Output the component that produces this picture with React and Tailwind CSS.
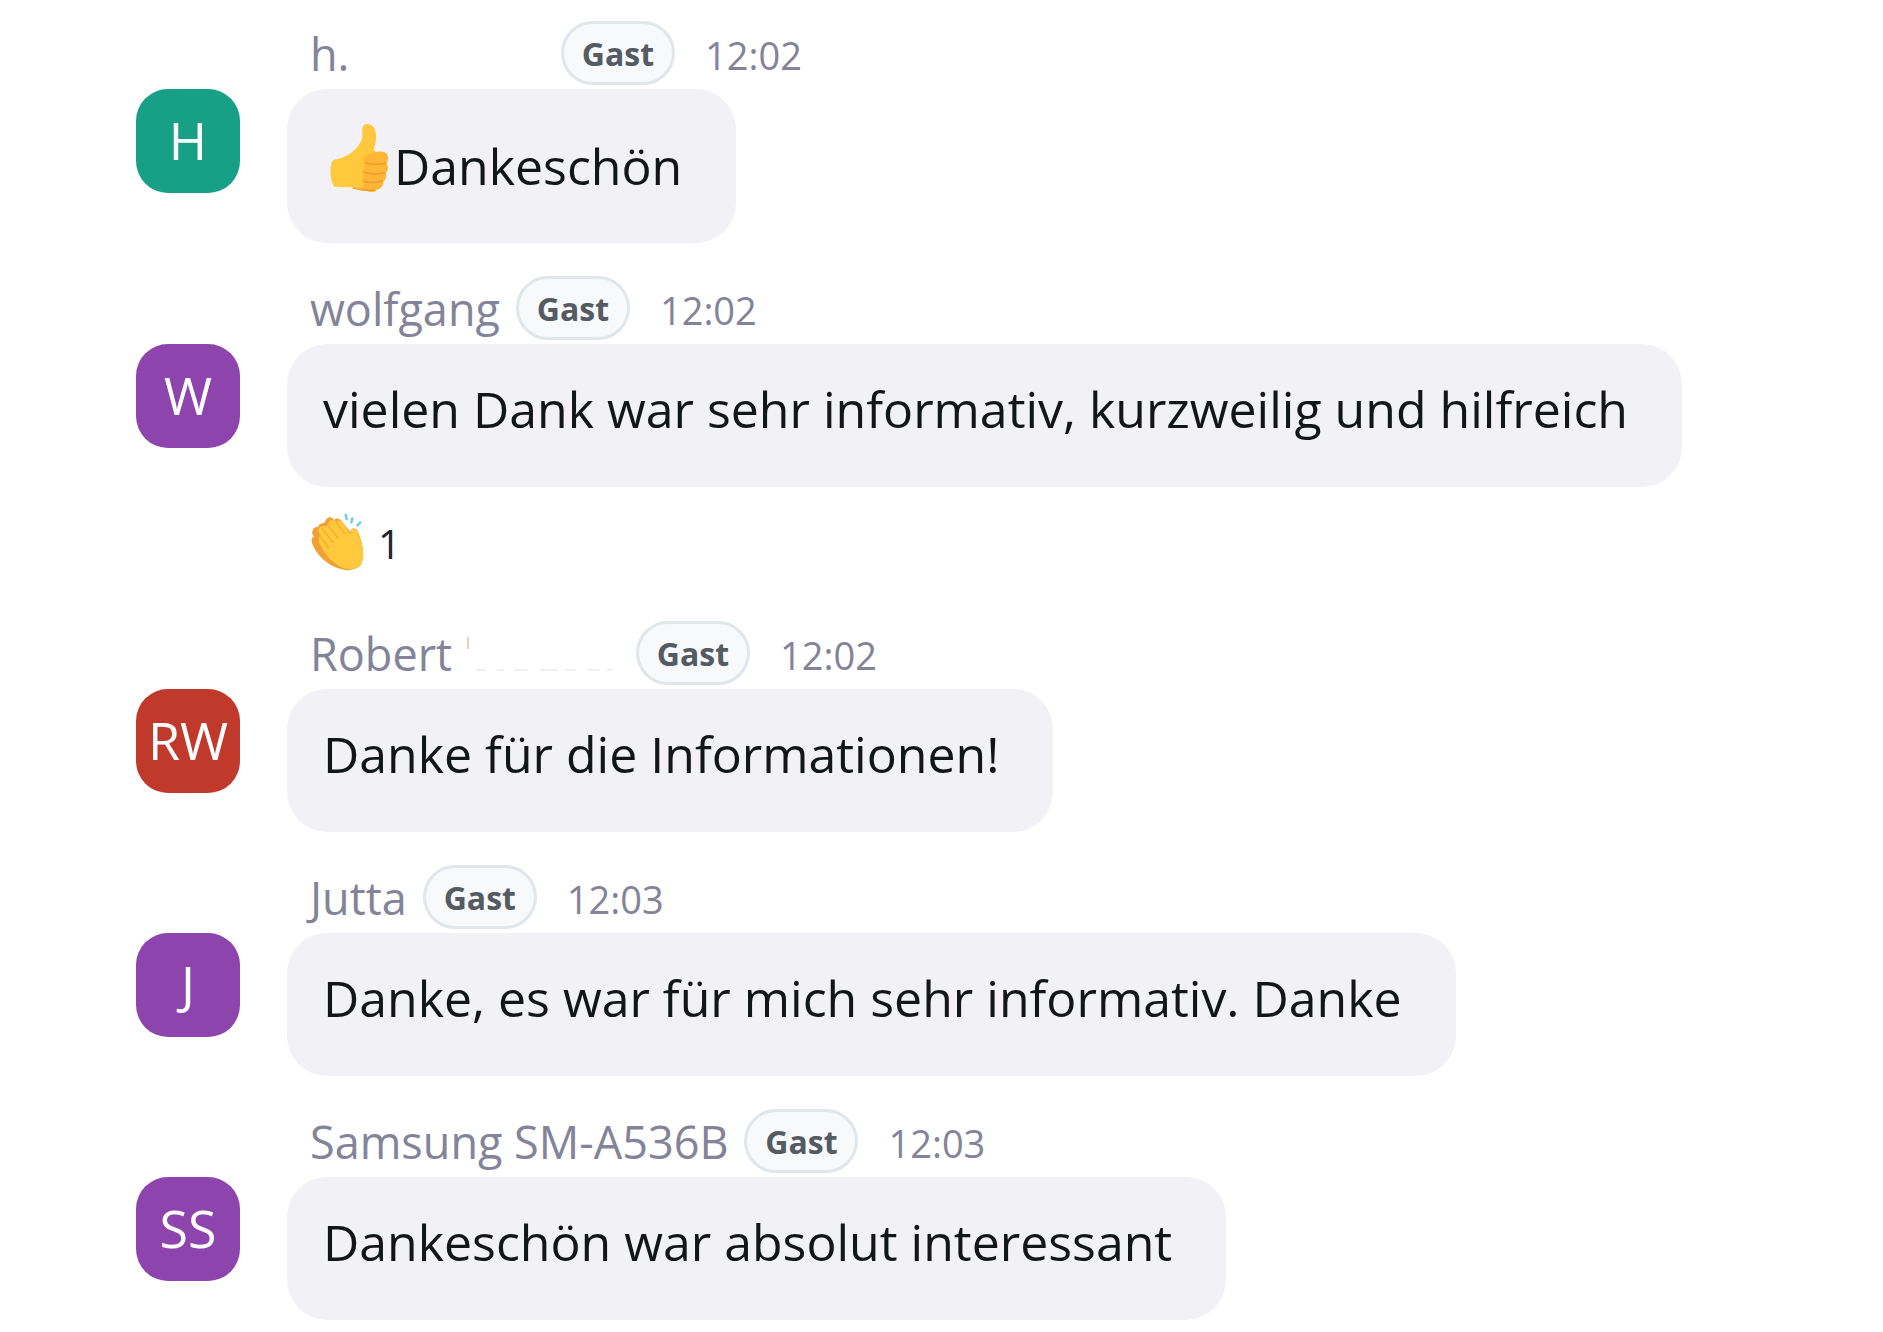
const ThumbsUp = () => (
  <svg viewBox="60 30 180 222" className="-mt-3 mr-1 ml-[7px] h-[74px] w-[60px] shrink-0" role="img" aria-label="Daumen hoch">
    <path d="M162 42C170 36 185 40 192 50C202 68 199 92 192 112C190 118 194 123 203 123C216 119 229 124 232 134C237 143 233 153 229 158C237 167 234 181 227 187C232 196 227 207 220 211C222 224 211 236 198 237C195 247 178 243 170 239C156 239 141 236 128 229L73 227C60 208 58 175 66 152C73 143 95 143 106 136C130 125 154 100 157 78C158 65 154 48 162 42Z" fill="#ffc83d" />
    <path d="M170 133C181 122 216 118 229 127C237 138 233 150 228 157C237 167 233 181 226 186C231 196 226 207 219 211C222 224 210 236 197 237C191 246 166 239 151 235C168 224 160 211 156 204C166 199 159 182 155 177C170 171 166 147 156 140Z" fill="#ffb636" />
    <path d="M166 155C185 163 210 160 226 157M162 184C183 192 209 188 225 186M160 211C178 216 203 214 217 210M130 231C151 237 174 240 195 237" fill="none" stroke="#f29c2c" strokeWidth="5" strokeLinecap="round" />
  </svg>
);

const ClappingHands = () => (
  <svg viewBox="30 30 162 186" className="h-[62px] w-[54px] shrink-0" role="img" aria-label="Klatschen">
    <path d="M38 88C41 77 50 79 55 77C59 63 71 69 75 62C82 43 96 47 103 57C111 48 122 54 130 66L151 92C153 80 168 78 173 91C181 107 185 123 189 144C191 165 187 184 182 193C173 203 153 208 139 208C92 201 55 170 38 132C33 121 35 108 42 106C35 101 36 94 38 88Z" fill="#efa135" />
    <path d="M58 81C65 72 77 80 84 72C88 54 101 53 110 63C118 50 131 65 142 86L152 102C149 85 163 78 171 91C182 112 187 132 189 151C190 171 188 183 181 193C170 202 151 207 139 204C104 194 76 164 61 132C52 113 58 101 65 106C55 94 53 87 58 81Z" fill="#ffc83d" />
    <path d="M66 83L99 124M86 74L114 111M109 64L132 96M62 109L86 140" fill="none" stroke="#f5b234" strokeWidth="5" strokeLinecap="round" />
    <path d="M137 41L140 55M157 52L154 65M181 64L172 73" fill="none" stroke="#5fd3ec" strokeWidth="7" strokeLinecap="round" />
  </svg>
);

// Faint edges that stay visible round a hidden surname
const HiddenName = () => (
  <svg viewBox="0 0 150 40" className="ml-[14px] h-10 w-[150px] shrink-0" aria-hidden="true">
    <path d="M2 4V16" stroke="#edcfba" strokeWidth="2" />
    <path d="M10 37H20M31 37H38M48 37H62M74 37H92M99 37H110M121 37H134M141 37H147" stroke="#f0eff3" strokeWidth="2" />
  </svg>
);

const messages = [
  { id: 1, name: 'h.', nameWidth: 'w-[235px]', initials: 'H', color: 'bg-[#18a086]', time: '12:02', emoji: true, text: 'Dankeschön' },
  { id: 2, name: 'wolfgang', initials: 'W', color: 'bg-[#8e44ad]', time: '12:02', text: 'vielen Dank war sehr informativ, kurzweilig und hilfreich', claps: 1 },
  { id: 3, name: 'Robert', nameWidth: 'w-[310px]', hidden: true, initials: 'RW', color: 'bg-[#c0392b]', time: '12:02', text: 'Danke für die Informationen!' },
  { id: 4, name: 'Jutta', initials: 'J', color: 'bg-[#8e44ad]', time: '12:03', text: 'Danke, es war für mich sehr informativ. Danke' },
  { id: 5, name: 'Samsung SM-A536B', initials: 'SS', color: 'bg-[#8e44ad]', time: '12:03', text: 'Dankeschön war absolut interessant' },
];

const Message = ({ message }) => {
  const { name, nameWidth, hidden, initials, color, time, emoji, text, claps } = message;

  return (
    <li className="flex items-start gap-[47px]">
      <div className={`mt-[68px] flex size-[104px] shrink-0 items-center justify-center rounded-[32px] pb-[2px] text-[52px] leading-none text-white ${color}`}>
        {initials}
      </div>

      <div className="flex min-w-0 flex-col items-start">
        <div className="mb-1 ml-[23px] flex h-16 items-center text-[#83839a]">
          <span className={`mr-4 flex items-center whitespace-nowrap text-[45px] leading-none ${nameWidth ?? ''}`}>
            {name}
            {hidden && <HiddenName />}
          </span>
          <span className="flex h-16 w-[114px] items-center justify-center rounded-full border-3 border-[#e1e6eb] bg-[#f7f9fa] pt-[2px] text-[32px] leading-none font-bold text-[#555b62]">
            Gast
          </span>
          <time className="ml-[30px] pt-1 text-[38px] leading-none">{time}</time>
        </div>

        <p className={`flex rounded-[40px] bg-[#f2f1f6] pr-[54px] pl-9 text-[50px] leading-[67px] text-[#131619] ${emoji ? 'pt-11 pb-[43px]' : 'pt-8 pb-11'}`}>
          {emoji && <ThumbsUp />}
          {text}
        </p>

        {claps && (
          <button type="button" className="ml-[23px] flex h-[101px] items-center gap-[14px] pt-[9px] text-[40px] leading-none text-[#232333]">
            <ClappingHands />
            <span className="pt-1">{claps}</span>
          </button>
        )}
      </div>
    </li>
  );
};

export default function App() {
  return (
    <main className="min-h-screen bg-white pt-[21px] pr-10 pl-[136px] font-['Open_Sans','Noto_Sans',sans-serif]">
      <ul className="flex flex-col gap-[33px]">
        {messages.map((message) => (
          <Message key={message.id} message={message} />
        ))}
      </ul>
    </main>
  );
}
